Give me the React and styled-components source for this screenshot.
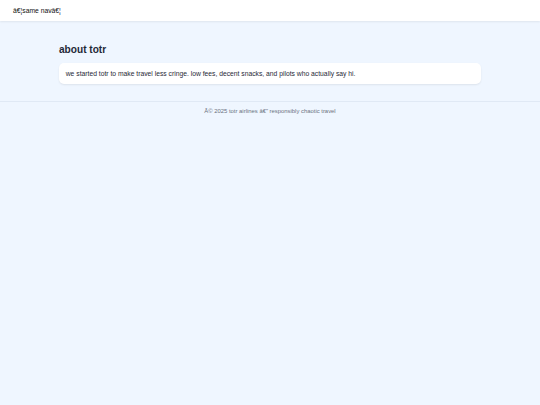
import styled, { createGlobalStyle } from "styled-components";

const GlobalStyle = createGlobalStyle`
  html, body {
    margin: 0;
    padding: 0;
    background: #eff6ff;
    font-family: "Liberation Sans", Arial, sans-serif;
    color: #111827;
  }
`;

const Page = styled.div`
  min-height: 405px;
  background: #eff6ff;
`;

const Header = styled.header`
  height: 20.5px;
  background: #ffffff;
  box-shadow: 0 1px 2px rgba(0, 0, 0, 0.07);
  display: flex;
  align-items: center;
  padding: 0 13px;
  font-size: 6.75px;
  color: #111;
`;

const Main = styled.main`
  max-width: 422px;
  margin: 0 auto;
  padding: 23.3px 0 17.5px;
`;

const Title = styled.h1`
  margin: 0 0 8.1px;
  font-size: 10.125px;
  font-weight: 700;
  color: #1f2937;
`;

const Card = styled.div`
  background: #ffffff;
  border-radius: 5px;
  box-shadow: 0 1px 2px rgba(0, 0, 0, 0.08);
  padding: 6.9px 6.75px;
  font-size: 6.75px;
  color: #1f2937;
`;

const Footer = styled.footer`
  border-top: 1px solid #e0e9f5;
  padding: 6px 0;
  text-align: center;
  font-size: 5.9px;
  color: #6b7280;
`;

export default function App() {
  return (
    <Page>
      <GlobalStyle />
      <Header>â€¦same navâ€¦</Header>
      <Main>
        <Title>about totr</Title>
        <Card>
          we started totr to make travel less cringe. low fees, decent snacks, and pilots who actually say hi.
        </Card>
      </Main>
      <Footer>Â© 2025 totr airlines â€” responsibly chaotic travel</Footer>
    </Page>
  );
}
